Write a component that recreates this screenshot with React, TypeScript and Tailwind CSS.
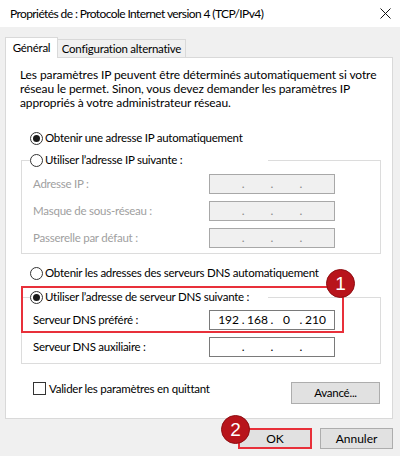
import React from 'react';

const font = { fontFamily: 'Lato, "Noto Sans", sans-serif' };

function Radio({ checked }: { checked?: boolean }) {
  return (
    <span className="flex h-[13px] w-[13px] shrink-0 items-center justify-center rounded-full border border-[#333333] bg-white">
      {checked && <span className="h-[7px] w-[7px] rounded-full bg-[#1a1a1a]" />}
    </span>
  );
}

function IpBox({ value, disabled }: { value?: string[]; disabled?: boolean }) {
  const parts = value ?? ['', '', '', ''];
  return (
    <div
      className={`flex h-[20px] w-[126px] items-center border px-[8px] text-[12px] tracking-normal ${
        disabled ? 'border-[#a8a8a8] bg-[#f0f0f0] text-[#8a8a8a]' : 'border-[#7a7a7a] bg-white text-black'
      }`}
    >
      {parts.map((p, i) => (
        <React.Fragment key={i}>
          <span className="w-[22px] text-center">{p}</span>
          {i < 3 && <span className="w-[8px] text-center">.</span>}
        </React.Fragment>
      ))}
    </div>
  );
}

function Row({ label, disabled, value }: { label: string; disabled?: boolean; value?: string[] }) {
  return (
    <div className="flex items-center pl-[11px]">
      <span className={`w-[176px] ${disabled ? 'text-[#a0a0a0]' : 'text-black'}`}>{label}</span>
      <IpBox disabled={disabled} value={value} />
    </div>
  );
}

function Badge({ n }: { n: string }) {
  return (
    <div className="flex h-[29px] w-[29px] items-center justify-center rounded-full border border-[#8e0e12] bg-[#b8141b] text-[19px] leading-none text-white">
      <span style={{ fontFamily: '"Liberation Sans", Arial, sans-serif' }}>{n}</span>
    </div>
  );
}

export default function App() {
  return (
    <div
      className="h-[456px] w-[400px] overflow-hidden whitespace-nowrap bg-[#f0f0f0] text-[11.5px] leading-[16px] tracking-[-0.25px] text-black"
      style={font}
    >
      {/* Title bar */}
      <div className="flex h-[27px] items-center justify-between bg-white pl-[10px] pr-[9px]">
        <span className="text-[12px] tracking-[-0.6px]">Propriétés de : Protocole Internet version 4 (TCP/IPv4)</span>
        <svg width="11" height="11" viewBox="0 0 11 11">
          <path d="M0.5 0.5 L10.5 10.5 M10.5 0.5 L0.5 10.5" stroke="#111" strokeWidth="1" />
        </svg>
      </div>

      {/* Tabs */}
      <div className="mt-[10px] flex items-end pl-[5px]">
        <div className="relative z-10 mb-[-1px] flex h-[21px] w-[53px] items-center justify-center border border-b-0 border-[#d9d9d9] bg-white">
          Général
        </div>
        <div className="flex h-[18px] w-[128px] items-center justify-center border border-b-0 border-l-0 border-[#d9d9d9]">
          Configuration alternative
        </div>
      </div>

      {/* Panel */}
      <div className="relative ml-[5px] h-[362px] w-[388px] border border-[#d9d9d9] bg-white">
        <p className="pl-[14px] pt-[10px] text-[12px] leading-[14px] tracking-[-0.1px]">
          Les paramètres IP peuvent être déterminés automatiquement si votre
          <br />
          réseau le permet. Sinon, vous devez demander les paramètres IP
          <br />
          appropriés à votre administrateur réseau.
        </p>

        <label className="ml-[24px] mt-[21px] flex h-[14px] items-center gap-[2px]">
          <Radio checked />
          <span>Obtenir une adresse IP automatiquement</span>
        </label>

        <fieldset className="ml-[15px] mt-[7px] w-[360px] border border-[#dcdcdc] pb-[5px] pl-[8px]">
          <legend className="flex h-[16px] w-[238px] items-center gap-[2px]">
            <Radio />
            <span>Utiliser l’adresse IP suivante :</span>
          </legend>
          <div className="-ml-[8px] mt-[6px] flex flex-col gap-[7px]">
            <Row label="Adresse IP :" disabled />
            <Row label="Masque de sous-réseau :" disabled />
            <Row label="Passerelle par défaut :" disabled />
          </div>
        </fieldset>

        <label className="ml-[24px] mt-[12px] flex h-[14px] items-center gap-[2px]">
          <Radio />
          <span>Obtenir les adresses des serveurs DNS automatiquement</span>
        </label>

        <fieldset className="ml-[15px] mt-[9px] w-[360px] border border-[#dcdcdc] pb-[6px] pl-[8px]">
          <legend className="flex h-[16px] w-[238px] items-center gap-[2px]">
            <Radio checked />
            <span>Utiliser l’adresse de serveur DNS suivante :</span>
          </legend>
          <div className="-ml-[8px] mt-[5px] flex flex-col gap-[7px]">
            <Row label="Serveur DNS préféré :" value={['192', '168', '0', '210']} />
            <Row label="Serveur DNS auxiliaire :" />
          </div>
        </fieldset>

        <div className="mt-[18px] flex items-start justify-between pl-[27px] pr-[12px]">
          <label className="flex h-[13px] items-center gap-[3px]">
            <span className="h-[13px] w-[13px] border border-[#333333] bg-white" />
            <span>Valider les paramètres en quittant</span>
          </label>
          <button className="h-[22px] w-[89px] border border-[#adadad] bg-[#e1e1e1]">Avancé...</button>
        </div>

        {/* Annotation 1 */}
        <div className="pointer-events-none absolute left-[15px] top-[228px] h-[47px] w-[323px] border-2 border-[#e8303a]" />
        <div className="absolute left-[320px] top-[211px]">
          <Badge n="1" />
        </div>
      </div>

      {/* Bottom buttons */}
      <div className="mt-[9px] flex justify-end gap-[8px] pr-[7px] text-[12px] tracking-normal">
        <div className="relative">
          <button className="h-[21px] w-[74px] border-2 border-[#e8303a] bg-[#e1e1e1]">OK</button>
          <div className="absolute left-[-17px] top-[-13px]">
            <Badge n="2" />
          </div>
        </div>
        <button className="h-[21px] w-[73px] border border-[#adadad] bg-[#e1e1e1]">Annuler</button>
      </div>
    </div>
  );
}
